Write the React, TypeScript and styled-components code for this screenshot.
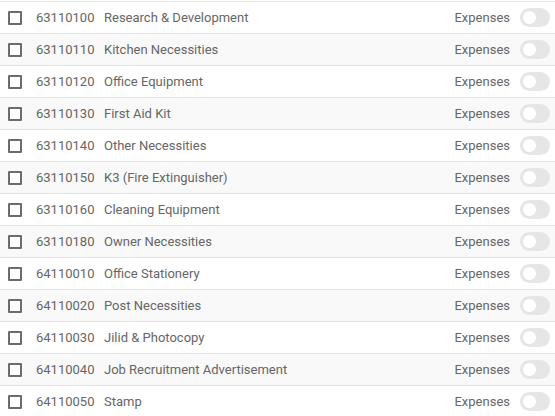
import React from 'react';
import styled, { createGlobalStyle } from 'styled-components';

const GlobalStyle = createGlobalStyle`
  html, body {
    margin: 0;
    padding: 0;
    background: #ffffff;
    font-family: Roboto, 'Liberation Sans', sans-serif;
    overflow: hidden;
  }
`;

const Table = styled.div`
  display: flex;
  flex-direction: column;
  width: 555px;
  padding-top: 1px;
`;

const Row = styled.div<{ $striped: boolean }>`
  display: flex;
  align-items: center;
  height: 31px;
  border-top: 1px solid #e2e2e8;
  background: ${(p) => (p.$striped ? '#f9f9f9' : '#ffffff')};
  font-size: 13px;
  color: #666666;
`;

const CheckCell = styled.div`
  width: 36px;
  display: flex;
  align-items: center;
  padding-left: 8px;
  box-sizing: border-box;
`;

const Checkbox = styled.span`
  width: 14px;
  height: 14px;
  box-sizing: border-box;
  border: 2px solid #6c6c6c;
  background: #ffffff;
  border-radius: 1px;
`;

const Code = styled.div`
  width: 68px;
`;

const Name = styled.div`
  flex: 1;
`;

const Type = styled.div`
  padding-right: 10px;
`;

const Toggle = styled.span`
  width: 30px;
  height: 19px;
  border-radius: 10px;
  background: #e6e6e6;
  margin-right: 5px;
  display: flex;
  align-items: center;
  padding-left: 3px;
  box-sizing: border-box;
`;

const Knob = styled.span`
  width: 13px;
  height: 13px;
  border-radius: 50%;
  background: #ffffff;
`;

const accounts = [
  ['63110100', 'Research & Development'],
  ['63110110', 'Kitchen Necessities'],
  ['63110120', 'Office Equipment'],
  ['63110130', 'First Aid Kit'],
  ['63110140', 'Other Necessities'],
  ['63110150', 'K3 (Fire Extinguisher)'],
  ['63110160', 'Cleaning Equipment'],
  ['63110180', 'Owner Necessities'],
  ['64110010', 'Office Stationery'],
  ['64110020', 'Post Necessities'],
  ['64110030', 'Jilid & Photocopy'],
  ['64110040', 'Job Recruitment Advertisement'],
  ['64110050', 'Stamp'],
];

export default function App() {
  return (
    <>
      <GlobalStyle />
      <Table>
        {accounts.map(([code, name], i) => (
          <Row key={code} $striped={i % 2 === 1}>
            <CheckCell>
              <Checkbox />
            </CheckCell>
            <Code>{code}</Code>
            <Name>{name}</Name>
            <Type>Expenses</Type>
            <Toggle>
              <Knob />
            </Toggle>
          </Row>
        ))}
      </Table>
    </>
  );
}
